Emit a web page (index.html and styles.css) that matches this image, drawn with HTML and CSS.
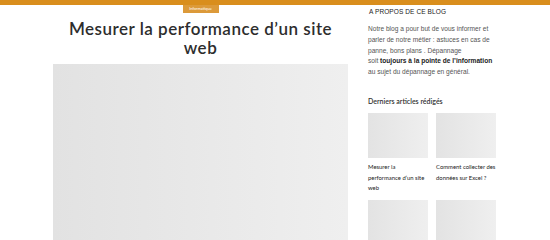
FILE: index.html
```html
<!DOCTYPE html>
<html lang="fr">
<head>
  <meta charset="UTF-8" />
  <meta name="viewport" content="width=device-width, initial-scale=1.0" />
  <title>Mesurer la performance d’un site web</title>
  <link rel="stylesheet" href="styles.css">
</head>
<body>
  <div class="topbar"></div>
  <div class="page">
    <main class="post">
      <span class="badge">Informatique</span>
      <h1 class="post-title">Mesurer la performance d’un site web</h1>
      <div class="cover"></div>
    </main>
    <aside class="sidebar">
      <h3 class="widget-title">A PROPOS DE CE BLOG</h3>
      <p class="about">
        Notre blog a pour but de vous informer et parler de notre métier : astuces en cas de panne, bons plans . Dépannage<br>
        soit <strong>toujours à la pointe de l’information</strong><br>
        au sujet du dépannage en général.
      </p>
      <h4 class="recent-title">Derniers articles rédigés</h4>
      <div class="recent">
        <a class="recent-item" href="#">
          <div class="thumb"></div>
          <span>Mesurer la performance d’un site web</span>
        </a>
        <a class="recent-item" href="#">
          <div class="thumb"></div>
          <span>Comment collecter des données sur Excel ?</span>
        </a>
        <a class="recent-item" href="#">
          <div class="thumb"></div>
        </a>
        <a class="recent-item" href="#">
          <div class="thumb"></div>
        </a>
      </div>
    </aside>
  </div>
</body>
</html>
```

FILE: styles.css
```css
body {
  margin: 0;
  font-family: "Liberation Sans", Arial, sans-serif;
  background: #fff;
  color: #333;
  overflow: hidden;
}
.topbar {
  height: 5px;
  background: #d98e1d;
}
.page {
  display: flex;
  gap: 20px;
  padding-left: 53px;
}
.post {
  width: 295px;
  display: flex;
  flex-direction: column;
  align-items: center;
}
.badge {
  background: #dc9a3a;
  color: #fff;
  font-size: 4px;
  line-height: 8px;
  padding: 0 6px;
  width: 24px;
  text-align: center;
  font-family: "Lato", sans-serif;
}
.post-title {
  font-family: "Lato", sans-serif;
  font-weight: 600;
  font-size: 17px;
  line-height: 19px;
  text-align: center;
  color: #2d2d2d;
  margin: 6px 0 7px;
  letter-spacing: 0.5px;
}
.cover {
  width: 295px;
  height: 176px;
  background: linear-gradient(90deg, #e2e2e2, #efefef);
}
.sidebar {
  width: 130px;
}
.widget-title {
  font-size: 6.5px;
  font-weight: normal;
  color: #222;
  margin: 2px 0 0 1px;
  line-height: 10px;
  letter-spacing: 0.1px;
}
.about {
  font-size: 6.6px;
  line-height: 10.8px;
  color: #555;
  margin: 7px 0 0 0;
}
.about strong {
  color: #222;
}
.recent-title {
  font-family: "Lato", sans-serif;
  font-size: 7px;
  font-weight: 600;
  color: #333;
  margin: 18px 0 0 0;
  line-height: 10px;
}
.recent {
  display: grid;
  grid-template-columns: 60px 60px;
  column-gap: 8px;
  row-gap: 6px;
  margin-top: 7px;
}
.recent-item {
  text-decoration: none;
  color: #222;
  font-family: "Lato", sans-serif;
  font-size: 5.9px;
  line-height: 10.6px;
}
.thumb {
  height: 45px;
  background: linear-gradient(90deg, #e3e3e3, #efefef);
  margin-bottom: 4px;
}
```
